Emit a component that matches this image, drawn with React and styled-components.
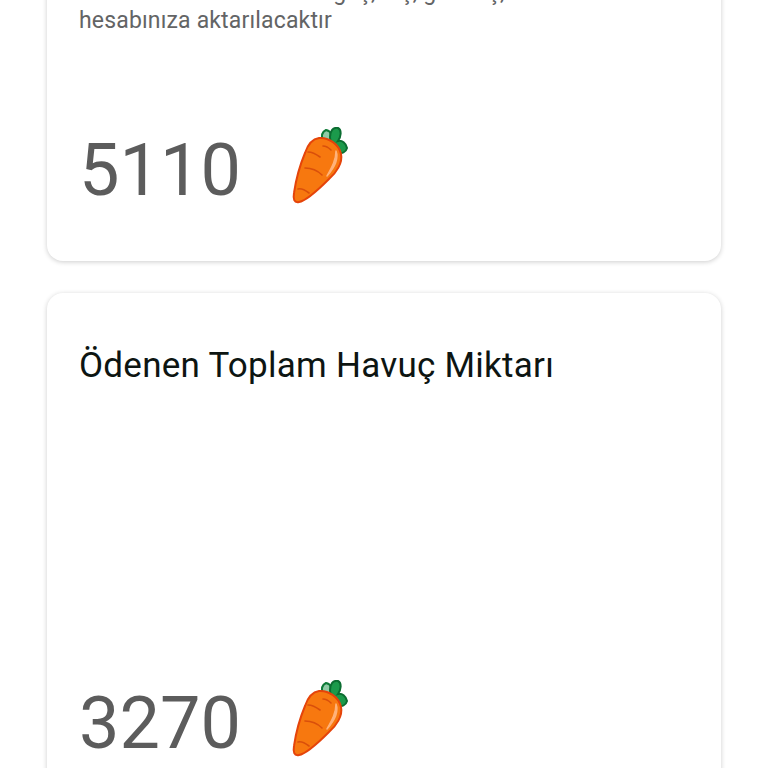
import React from "react";
import styled, { createGlobalStyle } from "styled-components";

const Global = createGlobalStyle`
  html, body { margin: 0; padding: 0; background: #fff; overflow: hidden; height: 768px; }
  body { font-family: Roboto, "Noto Sans", sans-serif; }
`;

const Page = styled.main`
  width: 768px;
  height: 768px;
  overflow: hidden;
  box-sizing: border-box;
  padding: 0 47px;
  display: flex;
  flex-direction: column;
  gap: 32px;
`;

const Card = styled.section`
  flex: none;
  height: ${(p) => p.$height}px;
  margin-top: ${(p) => p.$offset || 0}px;
  box-sizing: border-box;
  padding: 0 32px;
  background: #fff;
  border-radius: 16px;
  box-shadow: 0 1px 5px rgba(0, 0, 0, 0.2);
  display: flex;
  flex-direction: column;
`;

const Title = styled.h2`
  margin: 52px 0 0;
  font-size: 35px;
  line-height: 41px;
  font-weight: 400;
  letter-spacing: 0.26px;
  color: #0d1512;
`;

const Description = styled.p`
  margin: 0;
  font-size: 23px;
  line-height: 28px;
  font-weight: 400;
  letter-spacing: 0.16px;
  white-space: nowrap;
  color: #636465;
`;

const Amount = styled.div`
  display: flex;
  align-items: center;
  gap: 51px;
  margin-top: ${(p) => p.$top}px;
`;

const Value = styled.span`
  font-size: 72px;
  line-height: 82px;
  color: #5c5c5c;
`;

const CarrotIcon = styled.svg`
  flex: none;
  width: 56px;
  height: 78px;
  margin-bottom: 10px;
`;

const Carrot = () => (
  <CarrotIcon viewBox="0 0 56 78">
    <path d="M31 14 C29 9 30 5 34 3 C39 4 41 9 40 15Z" fill="#8fcba6" stroke="#0e7a38" strokeWidth="2" />
    <path d="M45 26 C50 27 54 25 55 21 C54 16 50 13 46 14 C49 10 50 3 46 1 C41 0 38 4 38 10 C38 14 40 21 45 26Z" fill="#1b9a4b" stroke="#0b6d31" strokeWidth="2" />
    <path d="M27 11 C36 10 47 17 49 27 C51 36 44 46 37 52 C27 62 14 74 7 75 C2 76 1 72 2 66 C4 52 8 38 13 26 C16 17 20 12 27 11Z" fill="#f7780f" stroke="#e5440a" strokeWidth="2" />
    <path d="M44 24 C47 32 43 40 35 49 C40 40 44 33 44 24Z" fill="#ffb27a" stroke="#ffb27a" strokeWidth="1.5" strokeLinejoin="round" />
    <g fill="none" stroke="#d94f0b" strokeWidth="1.6" strokeLinecap="round">
      <path d="M16 25 C21 25 24 27 28 30" />
      <path d="M13 41 C19 41 25 43 30 48" />
      <path d="M6 62 C10 61 13 63 17 66" />
      <path d="M31 19 C33 19 36 20 39 23" />
    </g>
  </CarrotIcon>
);

export default function App() {
  return (
    <>
      <Global />
      <Page>
        <Card $height={282} $offset={-21}>
          <Description>
            Kalan tutarlar burada en geç, ölç, gönenç, ödül alınacak
            <br />
            hesabınıza aktarılacaktır
          </Description>
          <Amount $top={92}>
            <Value>5110</Value>
            <Carrot />
          </Amount>
        </Card>
        <Card $height={520}>
          <Title>Ödenen Toplam Havuç Miktarı</Title>
          <Amount $top={294}>
            <Value>3270</Value>
            <Carrot />
          </Amount>
        </Card>
      </Page>
    </>
  );
}
